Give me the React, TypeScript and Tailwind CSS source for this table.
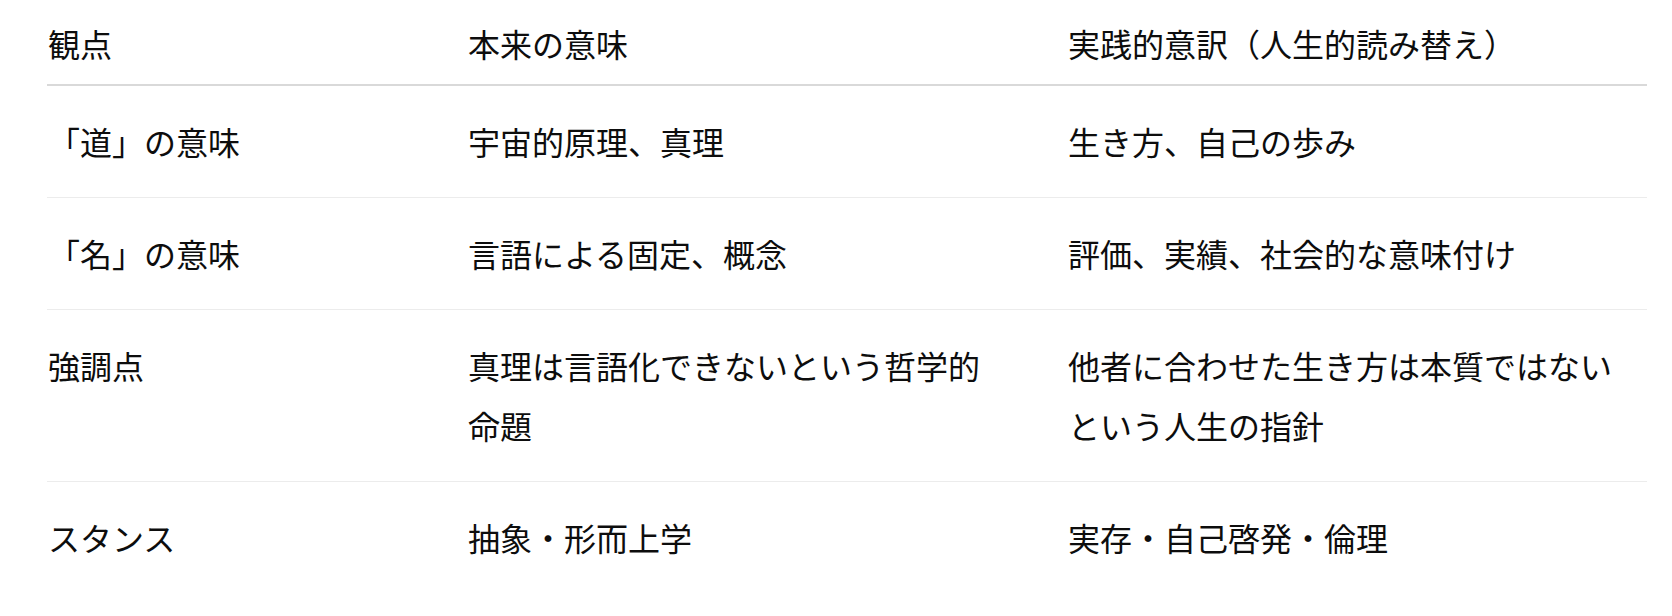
import React from "react";

const rows: [string, string, string][] = [
  ["「道」の意味", "宇宙的原理、真理", "生き方、自己の歩み"],
  ["「名」の意味", "言語による固定、概念", "評価、実績、社会的な意味付け"],
  ["強調点", "真理は言語化できないという哲学的命題", "他者に合わせた生き方は本質ではないという人生の指針"],
  ["スタンス", "抽象・形而上学", "実存・自己啓発・倫理"],
];

export default function App() {
  return (
    <div
      className="w-[1672px] h-[616px] bg-white text-[#0d0d0d] overflow-hidden"
      style={{ fontFamily: '"Noto Sans CJK JP", "Noto Sans", sans-serif' }}
    >
      <div className="ml-[47px] w-[1600px] text-[32px] leading-[60px]">
        <div className="grid grid-cols-[421px_600px_579px] border-b-2 border-[#d9d9d9] pt-[13px] pb-[11px]">
          <div className="pl-px">観点</div>
          <div className="pr-[64px]">本来の意味</div>
          <div className="pr-[16px]">実践的意訳（人生的読み替え）</div>
        </div>
        {rows.map((r, i) => (
          <div
            key={i}
            className={
              "grid grid-cols-[421px_600px_579px] pt-[25px] pb-[26px] " +
              (i < rows.length - 1 ? "border-b border-[#ececec]" : "")
            }
          >
            <div className="pl-px">{r[0]}</div>
            <div className="pr-[64px]">{r[1]}</div>
            <div className="pr-[16px]">{r[2]}</div>
          </div>
        ))}
      </div>
    </div>
  );
}
